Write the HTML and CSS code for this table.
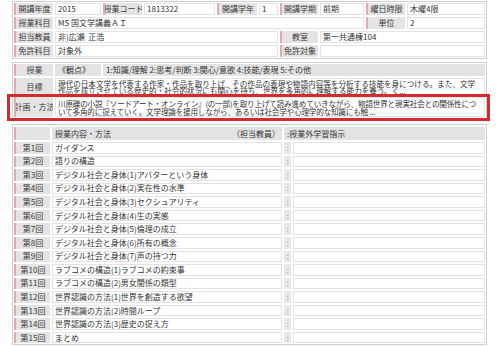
FILE: index.html
```html
<!DOCTYPE html>
<html lang="ja">
<head>
<meta charset="utf-8">
<title>シラバス</title>
<link rel="stylesheet" href="styles.css">
</head>
<body>
<div class="page">
  <section class="box info">
    <div class="lbl">開講年度</div><div class="val">2015</div>
    <div class="lbl">授業コード</div><div class="val">1813322</div>
    <div class="lbl">開講学年</div><div class="val">1</div>
    <div class="lbl">開講学期</div><div class="val">前期</div>
    <div class="lbl">曜日時限</div><div class="val">木曜4限</div>

    <div class="lbl">授業科目</div><div class="val span7">MS 国文学講義ＡＩ</div>
    <div class="lbl">単位</div><div class="val">2</div>

    <div class="lbl">担当教員</div><div class="val span5">非)広瀬&nbsp; 正浩</div>
    <div class="lbl">教室</div><div class="val span3">第一共通棟104</div>

    <div class="lbl">免許科目</div><div class="val span5">対象外</div>
    <div class="lbl">免許対象</div><div class="val span3"></div>
  </section>

  <section class="box outline">
    <div class="lbl">授業</div>
    <div class="hdr">《観点》</div>
    <div class="hdr">1:知識/理解 2:思考/判断 3:関心/意欲 4:技能/表現 5:その他</div>

    <div class="lbl">目標</div>
    <div class="val multi span2">現代の日本文学を代表する作家・作品を取り上げ、その作品の表現や物語内容等を分析する技能を身につける。また、文学<br>作品を成立させている歴史的・社会的状況にも関心を持ち、世界を多角的に理解する能力を養う。く...</div>

    <div class="plan">
      <div class="lbl">計画・方法</div>
      <div class="val multi tight">川原礫の小説『ソードアート・オンライン』(の一部)を取り上げて読み進めていきながら、物語世界と現実社会との関係性につ<br>いて多角的に捉えていく。文学理論を援用しながら、あるいは社会学や心理学的な知識にも触 ...</div>
    </div>
  </section>

  <section class="box schedule">
    <div class="lbl"></div>
    <div class="hdr split"><span>授業内容・方法</span><span>（担当教員）</span></div>
    <div class="hdr span2">:授業外学習指示</div>

    <div class="lbl">第1回</div><div class="val">ガイダンス</div><div class="colon">:</div><div class="val"></div>
    <div class="lbl">第2回</div><div class="val">語りの構造</div><div class="colon">:</div><div class="val"></div>
    <div class="lbl">第3回</div><div class="val">デジタル社会と身体(1)アバターという身体</div><div class="colon">:</div><div class="val"></div>
    <div class="lbl">第4回</div><div class="val">デジタル社会と身体(2)実在性の水準</div><div class="colon">:</div><div class="val"></div>
    <div class="lbl">第5回</div><div class="val">デジタル社会と身体(3)セクシュアリティ</div><div class="colon">:</div><div class="val"></div>
    <div class="lbl">第6回</div><div class="val">デジタル社会と身体(4)生の実感</div><div class="colon">:</div><div class="val"></div>
    <div class="lbl">第7回</div><div class="val">デジタル社会と身体(5)倫理の成立</div><div class="colon">:</div><div class="val"></div>
    <div class="lbl">第8回</div><div class="val">デジタル社会と身体(6)所有の概念</div><div class="colon">:</div><div class="val"></div>
    <div class="lbl">第9回</div><div class="val">デジタル社会と身体(7)声の持つ力</div><div class="colon">:</div><div class="val"></div>
    <div class="lbl">第10回</div><div class="val">ラブコメの構造(1)ラブコメの約束事</div><div class="colon">:</div><div class="val"></div>
    <div class="lbl">第11回</div><div class="val">ラブコメの構造(2)男女関係の類型</div><div class="colon">:</div><div class="val"></div>
    <div class="lbl">第12回</div><div class="val">世界認識の方法(1)世界を創造する欲望</div><div class="colon">:</div><div class="val"></div>
    <div class="lbl">第13回</div><div class="val">世界認識の方法(2)時間ループ</div><div class="colon">:</div><div class="val"></div>
    <div class="lbl">第14回</div><div class="val">世界認識の方法(3)歴史の捉え方</div><div class="colon">:</div><div class="val"></div>
    <div class="lbl">第15回</div><div class="val">まとめ</div><div class="colon">:</div><div class="val"></div>
  </section>
</div>
</body>
</html>
```

FILE: styles.css
```css
html, body {
  margin: 0;
  padding: 0;
  background: #ffffff;
}

body {
  font-family: "Noto Sans CJK JP", "Noto Sans", sans-serif;
  font-size: 8px;
  color: #333333;
}

.page {
  padding: 1px 0 0 12px;
  width: 475px;
}

.box {
  border: 1px solid #cfcfcf;
  background: #ffffff;
  padding: 1px;
  display: grid;
  gap: 2px;
}

.info {
  grid-template-columns: 39px 46px 39px 71px 40px 19px 38px 44px 39px 78px;
  grid-auto-rows: 12px;
}

.outline {
  margin-top: 3px;
  grid-template-columns: 39px 46px 1fr;
  grid-template-rows: 12px 17px 20px;
}

.schedule {
  margin-top: 5px;
  padding-top: 2px;
  grid-template-columns: 36px 230px 7px 1fr;
  grid-template-rows: 13px;
  grid-auto-rows: 11.57px;
}

.lbl, .val, .hdr, .colon {
  display: flex;
  align-items: center;
  line-height: 10px;
  white-space: nowrap;
  overflow: hidden;
  box-sizing: border-box;
}

.lbl {
  justify-content: center;
  background: #e4e4e4;
  border-left: 2px solid #e4a9b0;
  color: #3a3a3a;
}

.val {
  background: #ffffff;
  border: 1px solid #e3e3e3;
  padding-left: 2px;
}

.hdr {
  background: #e3e3e3;
  padding-left: 3px;
}

.split {
  justify-content: space-between;
  padding-right: 2px;
}

.colon {
  background: #e8e8e8;
  color: #9a9a9a;
  justify-content: center;
}

.multi {
  display: block;
  font-size: 7.6px;
  line-height: 7.6px;
  padding-top: 0.5px;
}

.tight {
  letter-spacing: -0.2px;
}

.span2 { grid-column: span 2; }
.span3 { grid-column: span 3; }
.span5 { grid-column: span 5; }
.span7 { grid-column: span 7; }

.plan {
  grid-column: 1 / -1;
  display: grid;
  grid-template-columns: 39px 1fr;
  gap: 2px;
  position: relative;
}

.plan .multi {
  padding-top: 2px;
}

.plan::after {
  content: "";
  position: absolute;
  left: -7px;
  right: -5px;
  top: -3px;
  bottom: -4px;
  border: 3px solid #d52a30;
  pointer-events: none;
}
```
